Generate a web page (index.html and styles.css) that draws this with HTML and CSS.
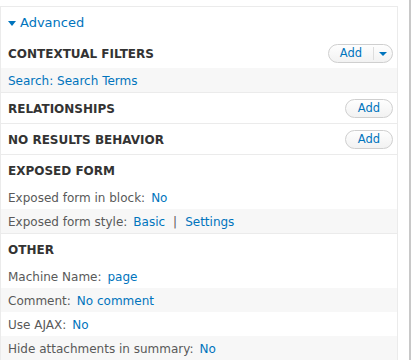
FILE: index.html
```html
<!DOCTYPE html>
<html>
<head>
<meta charset="utf-8">
<link rel="stylesheet" href="styles.css">
</head>
<body>
<div class="frame">
  <div class="panel">
    <div class="advanced"><span class="tri"></span><a class="link">Advanced</a></div>

    <div class="section">
      <div class="heading"><span>Contextual filters</span>
        <span class="btn split"><span class="btn-label">Add</span><span class="btn-arrow"><span class="tri small"></span></span></span>
      </div>
      <div class="row alt"><a class="link">Search: Search Terms</a></div>
    </div>

    <div class="section">
      <div class="heading"><span>Relationships</span><span class="btn">Add</span></div>
    </div>

    <div class="section">
      <div class="heading"><span>No results behavior</span><span class="btn">Add</span></div>
    </div>

    <div class="section">
      <div class="heading"><span>Exposed form</span></div>
      <div class="row"><span class="label">Exposed form in block:</span><a class="link">No</a></div>
      <div class="row alt"><span class="label">Exposed form style:</span><a class="link">Basic</a><span class="sep">|</span><a class="link">Settings</a></div>
    </div>

    <div class="section last">
      <div class="heading"><span>Other</span></div>
      <div class="row"><span class="label">Machine Name:</span><a class="link">page</a></div>
      <div class="row alt"><span class="label">Comment:</span><a class="link">No comment</a></div>
      <div class="row"><span class="label">Use AJAX:</span><a class="link">No</a></div>
      <div class="row alt"><span class="label">Hide attachments in summary:</span><a class="link">No</a></div>
    </div>
  </div>
</div>
</body>
</html>
```

FILE: styles.css
```css
html, body {
  margin: 0;
  padding: 0;
  background: #fff;
}
body {
  font-family: "DejaVu Sans", Verdana, sans-serif;
  font-size: 12px;
  color: #595959;
}
.frame {
  width: 409px;
  height: 360px;
  overflow: hidden;
  border-right: 2px solid #c8c8c8;
}
.panel {
  width: 396px;
  margin-top: 6px;
  border: 1px solid #ebebeb;
  border-bottom: none;
  min-height: 400px;
}
.link {
  color: #0074bd;
  text-decoration: none;
}
.advanced {
  height: 31px;
  display: flex;
  align-items: center;
  padding: 0 7px 0 7px;
  font-size: 13px;
  box-sizing: border-box;
}
.tri {
  display: inline-block;
  width: 0;
  height: 0;
  border-left: 4px solid transparent;
  border-right: 4px solid transparent;
  border-top: 5px solid #0074bd;
  margin-right: 4px;
  margin-top: 1px;
}
.tri.small {
  border-left-width: 4px;
  border-right-width: 4px;
  border-top-width: 4px;
  margin: 0;
}
.section {
  border-bottom: 1px solid #ebebeb;
}
.heading {
  box-sizing: border-box;
  height: 30px;
  display: flex;
  align-items: center;
  justify-content: space-between;
  padding: 1px 4px 0 7px;
  font-weight: bold;
  text-transform: uppercase;
  color: #333;
  font-size: 12px;
}
.row {
  box-sizing: border-box;
  height: 24px;
  display: flex;
  align-items: center;
  padding: 1px 7px 0 7px;
}
.row.alt {
  background: #f7f7f7;
}
.label {
  margin-right: 6px;
}
.sep {
  margin: 0 8px;
  color: #595959;
}
.btn {
  box-sizing: border-box;
  height: 19px;
  width: 48px;
  border: 1px solid #cfcfcf;
  border-radius: 10px;
  background: linear-gradient(#fefefe, #f2f2f2);
  color: #0074bd;
  font-weight: normal;
  text-transform: none;
  font-size: 11.5px;
  display: flex;
  align-items: center;
  justify-content: center;
  margin-top: -1px;
}
.btn.split {
  width: 65px;
  justify-content: flex-start;
  padding: 0;
}
.btn-label {
  width: 44px;
  text-align: center;
  border-right: 1px solid #ddd;
  height: 13px;
  line-height: 13px;
}
.btn-arrow {
  flex: 1;
  display: flex;
  align-items: center;
  justify-content: center;
  padding-top: 1px;
}
```
